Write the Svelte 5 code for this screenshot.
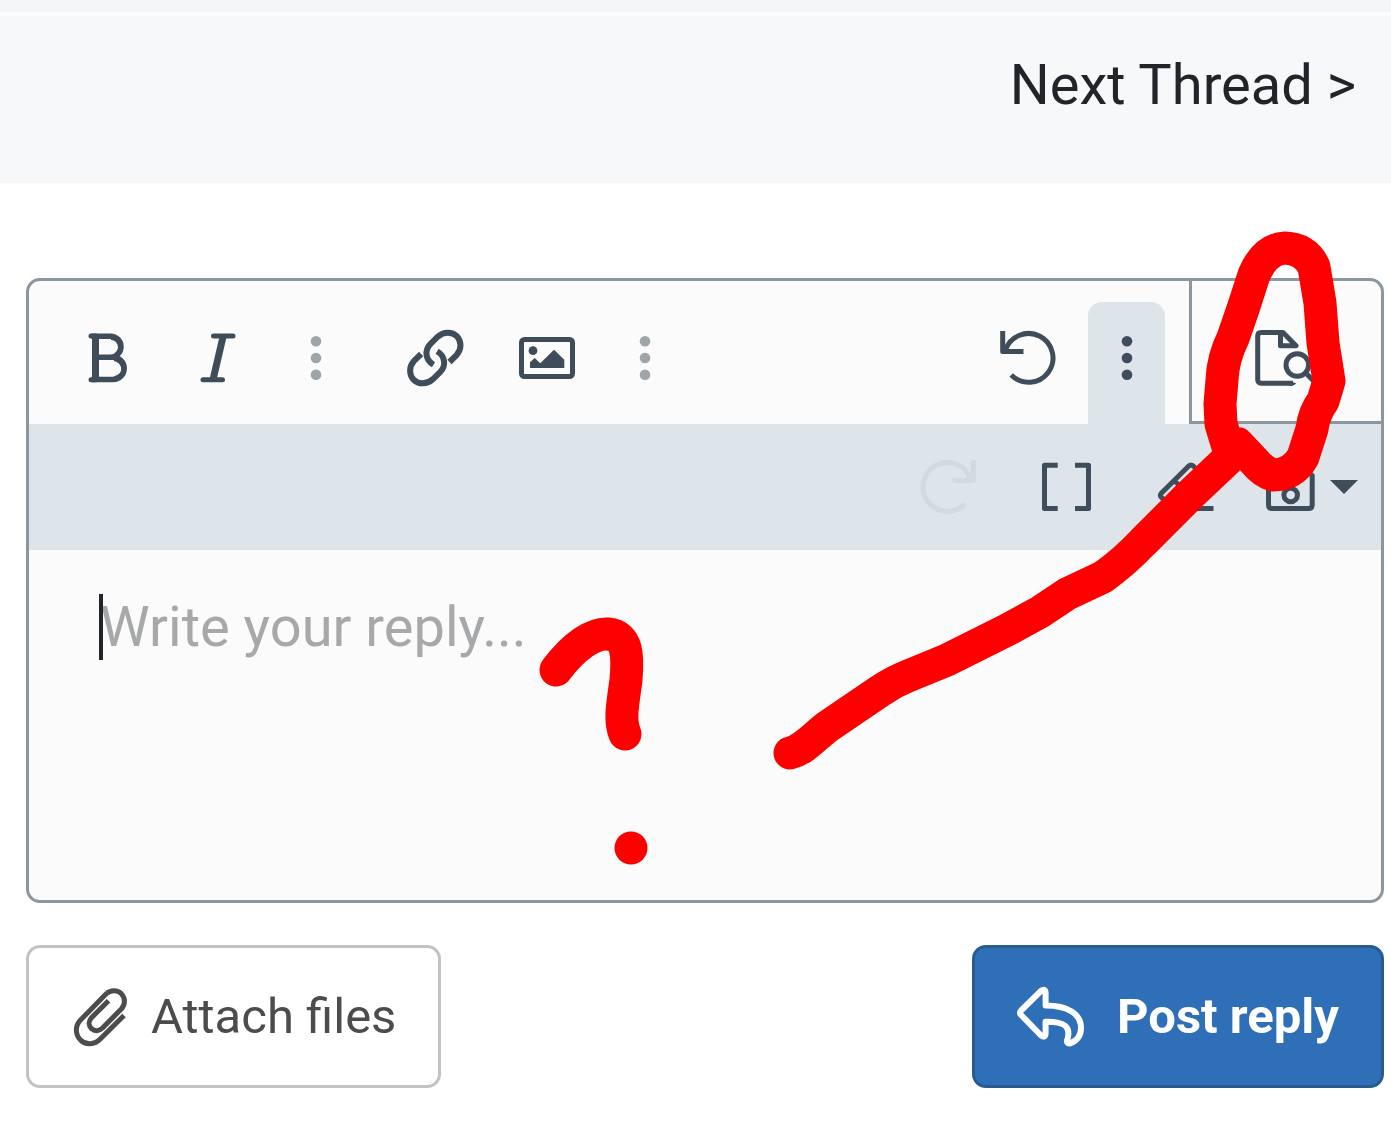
<script>
  let reply = $state('');
</script>

<div class="page">
  <header>
    <nav><a href="#next">Next Thread &gt;</a></nav>
  </header>

  <form onsubmit={(e) => e.preventDefault()}>
    <div class="editor">
      <div class="toolbar">
        <div class="group">
          <button type="button" class="tool" aria-label="Bold">
            <svg viewBox="0 0 64 64" class="icon"><path stroke-width="7" d="M21.5 10V54" /><path stroke-width="5.5" d="M17.5 10.2H36.5a10.5 10.5 0 0 1 0 21H21.5M36.5 31.2h2.500a11.2 11.2 0 0 1 0 22.4H17.5" /><path stroke-width="2" d="M37 13a8 8 0 0 1 8 8a8 8 0 0 1 -4 7M40 34a10 10 0 0 1 8.500 9a9 9 0 0 1 -8 8" /><path stroke-width="5" stroke-linecap="round" d="M17 10H22M17 53.7H22" /></svg>
          </button>
          <button type="button" class="tool" aria-label="Italic">
            <svg viewBox="0 0 64 64" class="icon"><path stroke-width="5" stroke-linecap="round" d="M27.5 10H47M17 53.7H36.5" /><path stroke-width="7" d="M37.2 10L27 53.7" /></svg>
          </button>
          <button type="button" class="tool more muted" aria-label="More text options">
            <svg viewBox="0 0 64 64" class="icon solid"><circle cx="32" cy="15.3" r="5.3" /><circle cx="32" cy="32" r="5.3" /><circle cx="32" cy="48.7" r="5.3" /></svg>
          </button>
        </div>
        <div class="group">
          <button type="button" class="tool" aria-label="Insert link">
            <svg viewBox="0 0 64 64" class="icon" stroke-width="6">
              <path d="M30.5 38.8C22.5 34 21 24.5 27.5 17.8L34.8 10.7C40.5 5.4 49 5.4 53.8 10.2C58.7 15.2 58.7 23.3 53.8 28.8L46.5 36" />
              <path d="M34.1 25.2C42.1 30 43.6 39.5 37.1 46.2L29.8 53.3C24.1 58.6 15.6 58.6 10.8 53.8C5.9 48.8 5.9 40.7 10.8 35.2L18.1 28" />
            </svg>
          </button>
          <button type="button" class="tool" aria-label="Insert image">
            <svg viewBox="0 0 64 64" class="icon"><rect x="6.5" y="13.5" width="51" height="37" rx="3" stroke-width="5" /><g class="solid"><circle cx="18" cy="24.7" r="4.4" /><path d="M15 42V36.3L19.7 32L25.3 37.3L39 23.7L49.3 33.7V42Z" /></g></svg>
          </button>
          <button type="button" class="tool more muted" aria-label="More insert options">
            <svg viewBox="0 0 64 64" class="icon solid"><circle cx="32" cy="15.3" r="5.3" /><circle cx="32" cy="32" r="5.3" /><circle cx="32" cy="48.7" r="5.3" /></svg>
          </button>
        </div>
        <div class="group end">
          <button type="button" class="tool" aria-label="Undo">
            <svg viewBox="0 0 64 64" class="icon" stroke-width="5"><path d="M9.5 24A24.4 24.4 0 1 1 15.2 49" /><path d="M6.7 5V25.5H27.5" /></svg>
          </button>
          <button type="button" class="tool open" aria-label="More options" aria-expanded="true">
            <svg viewBox="0 0 64 64" class="icon solid"><circle cx="32" cy="15.3" r="5.3" /><circle cx="32" cy="32" r="5.3" /><circle cx="32" cy="48.7" r="5.3" /></svg>
          </button>
        </div>
        <button type="button" class="preview" aria-label="Preview">
          <svg viewBox="0 0 64 64" class="icon" stroke-width="5"><path d="M38 57.2H6.2Q2.7 57.2 2.7 53.7V10Q2.7 6.5 6.2 6.5H28L41 19.8H25.5V6.5" /><path class="solid" d="M34 54.7C37 56 39 56.6 41 57C40.200 59 39 59.700 34 59.700Z" /><circle cx="42.3" cy="39" r="11.3" /><path d="M50.5 46.7L62 58.5" /></svg>
        </button>
      </div>

      <div class="drawer">
        <button type="button" class="tool" aria-label="Redo" disabled>
          <svg viewBox="0 0 64 64" class="icon" stroke-width="5"><path d="M54.5 24A24.4 24.4 0 1 0 48.8 49" /><path d="M57.3 5V25.5H36.5" /></svg>
        </button>
        <button type="button" class="tool" aria-label="Toggle BB code">
          <svg viewBox="0 0 64 64" class="icon" stroke-width="5"><path d="M22.7 10.2H9.5V53.5H22.7M40 10.2H53.5V53.5H40" /></svg>
        </button>
        <button type="button" class="tool" aria-label="Remove formatting">
          <svg viewBox="0 0 64 64" class="icon" stroke-width="5"><path d="M59.5 53.5H21L7.5 42.5Q5.5 40.5 7.5 38L34.5 11.2Q37 9 39.5 11.2L55.5 27.2Q57.5 29.5 55.5 32L34 53.5M20 25.5L42.5 46" /></svg>
        </button>
        <button type="button" class="drafts" aria-label="Drafts">
          <svg viewBox="0 0 56 56" class="disk" stroke-width="5"><path d="M9 6.5H39L49.2 16.5V46Q49.2 49.5 45.7 49.5H9Q5.5 49.5 5.5 46V10Q5.5 6.5 9 6.5ZM15 6.5V19H37V6.5" /><circle cx="27.7" cy="36" r="6.8" /></svg>
          <svg viewBox="0 0 28 14" class="arrow solid"><path d="M0 0H28L14 14Z" /></svg>
        </button>
      </div>

      <div class="writing">
        <textarea aria-label="Reply" placeholder="Write your reply..." bind:value={reply}></textarea>
        <span class="cursor"></span>
      </div>
    </div>

    <div class="actions">
      <button type="button" class="attach">
        <svg viewBox="0 0 56 64" class="clip" stroke-width="5"><path d="M51 30.5L27.5 53.8C21.5 60.2 12.5 60.2 7.5 55C2 49.5 2 41 7.3 35.3L33 9C37.5 4.6 44.5 4.6 48.3 8.6C52.5 13 52.5 19.5 48.3 24L29.5 43C26 46.3 21.5 46.5 18.5 43.7C15.3 40.500 15.3 36 18.5 32.7L35.5 15.7" /></svg>
        Attach files
      </button>
      <button type="submit" class="post">
        <svg viewBox="0 0 68 64" class="back" stroke-width="6"><path d="M4.1 25.5L24 5.8Q28.6 2.8 28.6 8V20.5C51 20.5 64 29 64 43C64 51 59 56 53.5 58.3C50.5 59 49 57 50.5 54C54 42 48 36.5 28.6 36.8V48Q28.6 53.5 24 50.5L4.1 30Q2 27.7 4.1 25.5Z" /></svg>
        Post reply
      </button>
    </div>
  </form>

  <svg class="ink" viewBox="0 0 1391 1142" aria-hidden="true">
    <path d="M556 670C574 646 593 633 608 634C628 636 628 656 626 680C623 703 619 720 625 734" />
    <path d="M631 848h0" />
    <path d="M790 753C803 750 812 739 827 727L880 691Q893 682 908 676L947 660L1007 630L1040 612L1067 594L1103 577Q1124 562 1143 542L1190 495L1228 459" />
    <path d="M1221 424L1220 404L1222 380Q1223 358 1233 338L1243 309L1254 275Q1265 249 1285 248Q1306 249 1314 267L1320 303L1323 343L1329 381L1323 401Q1314 413 1312 429L1303 457Q1293 475 1273 475Q1263 472 1254 461L1238 444L1228 447L1221 424" />
  </svg>
</div>

<style>
  :global(body) {
    margin: 0;
    background: #fff;
  }

  .page {
    position: relative;
    overflow: hidden;
    font-family: Roboto, "Liberation Sans", sans-serif;
    color: #212529;
  }

  header {
    border-top: 12px solid #f4f6f8;
    background: #f6f8fa;
  }

  nav {
    display: flex;
    justify-content: flex-end;
    padding: 27px 35px 56px;
    border-top: 4px solid #f9fbfc;
  }

  nav a {
    color: #212529;
    font-size: 56px;
    line-height: 84px;
    text-decoration: none;
  }

  form {
    padding: 95px 7px 54px 26px;
  }

  button {
    box-sizing: border-box;
    margin: 0;
    padding: 0;
    border: 0;
    background: none;
    color: #3f4c5a;
    font: inherit;
    cursor: pointer;
  }

  svg {
    display: block;
    flex: none;
    fill: none;
    stroke: currentColor;
    stroke-linejoin: round;
  }

  .solid {
    fill: currentColor;
    stroke: none;
  }

  .icon {
    width: 64px;
    height: 64px;
  }

  .editor {
    overflow: hidden;
    border: 3px solid #8b969f;
    border-radius: 14px;
    background: #fbfbfb;
  }

  .toolbar {
    display: flex;
    height: 143px;
    padding-left: 21px;
  }

  .group {
    display: flex;
    padding-top: 21px;
    margin-right: 21px;
  }

  .end {
    gap: 4px;
    margin: 0 24px 0 auto;
  }

  .tool {
    display: flex;
    align-items: center;
    justify-content: center;
    width: 112px;
    height: 112px;
  }

  .more {
    width: 84px;
  }

  .muted {
    color: #9ea4a8;
  }

  .open {
    width: 77px;
    height: 122px;
    padding-bottom: 10px;
    border-radius: 14px 14px 0 0;
    background: #dde4ea;
  }

  .preview {
    display: flex;
    align-items: center;
    justify-content: center;
    width: 192px;
    padding-top: 14px;
    border-bottom: 3px solid #8b969f;
    border-left: 3px solid #8b969f;
  }

  .drawer {
    display: flex;
    align-items: center;
    justify-content: flex-end;
    gap: 7px;
    height: 126px;
    padding-right: 7px;
    background: #dde4ea;
  }

  .tool:disabled {
    color: #d3d9df;
  }

  .drafts {
    display: flex;
    align-items: center;
    gap: 11px;
    height: 112px;
    padding: 0 16px 0 14px;
  }

  .disk {
    width: 56px;
    height: 56px;
  }

  .arrow {
    width: 28px;
    height: 14px;
  }

  .writing {
    position: relative;
  }

  textarea {
    display: block;
    box-sizing: border-box;
    width: 100%;
    height: 350px;
    padding: 44px 71px;
    border: 0;
    outline: 0;
    resize: none;
    background: none;
    color: #212529;
    font: inherit;
    font-size: 56px;
    line-height: 66px;
  }

  textarea::placeholder {
    color: #a6a8aa;
    opacity: 1;
  }

  .cursor {
    position: absolute;
    top: 44px;
    left: 70px;
    width: 4px;
    height: 66px;
    background: #212529;
  }

  .actions {
    display: flex;
    justify-content: space-between;
    margin-top: 42px;
  }

  .attach,
  .post {
    display: flex;
    align-items: center;
    height: 143px;
    border: 3px solid #c2c2c2;
    border-radius: 14px;
    font-size: 49px;
  }

  .attach {
    gap: 22px;
    padding: 0 42px 0 44px;
    color: #4c4c4c;
  }

  .post {
    gap: 32px;
    padding: 0 42px;
    border-color: #285c8f;
    background: #2e6fb7;
    color: #fff;
    font-weight: 700;
  }

  .clip {
    width: 56px;
    height: 64px;
  }

  .back {
    width: 68px;
    height: 64px;
  }

  .ink {
    position: absolute;
    top: 0;
    right: 0;
    width: 1391px;
    height: 1142px;
    stroke: #f00;
    stroke-width: 33px;
    stroke-linecap: round;
    pointer-events: none;
  }
</style>
